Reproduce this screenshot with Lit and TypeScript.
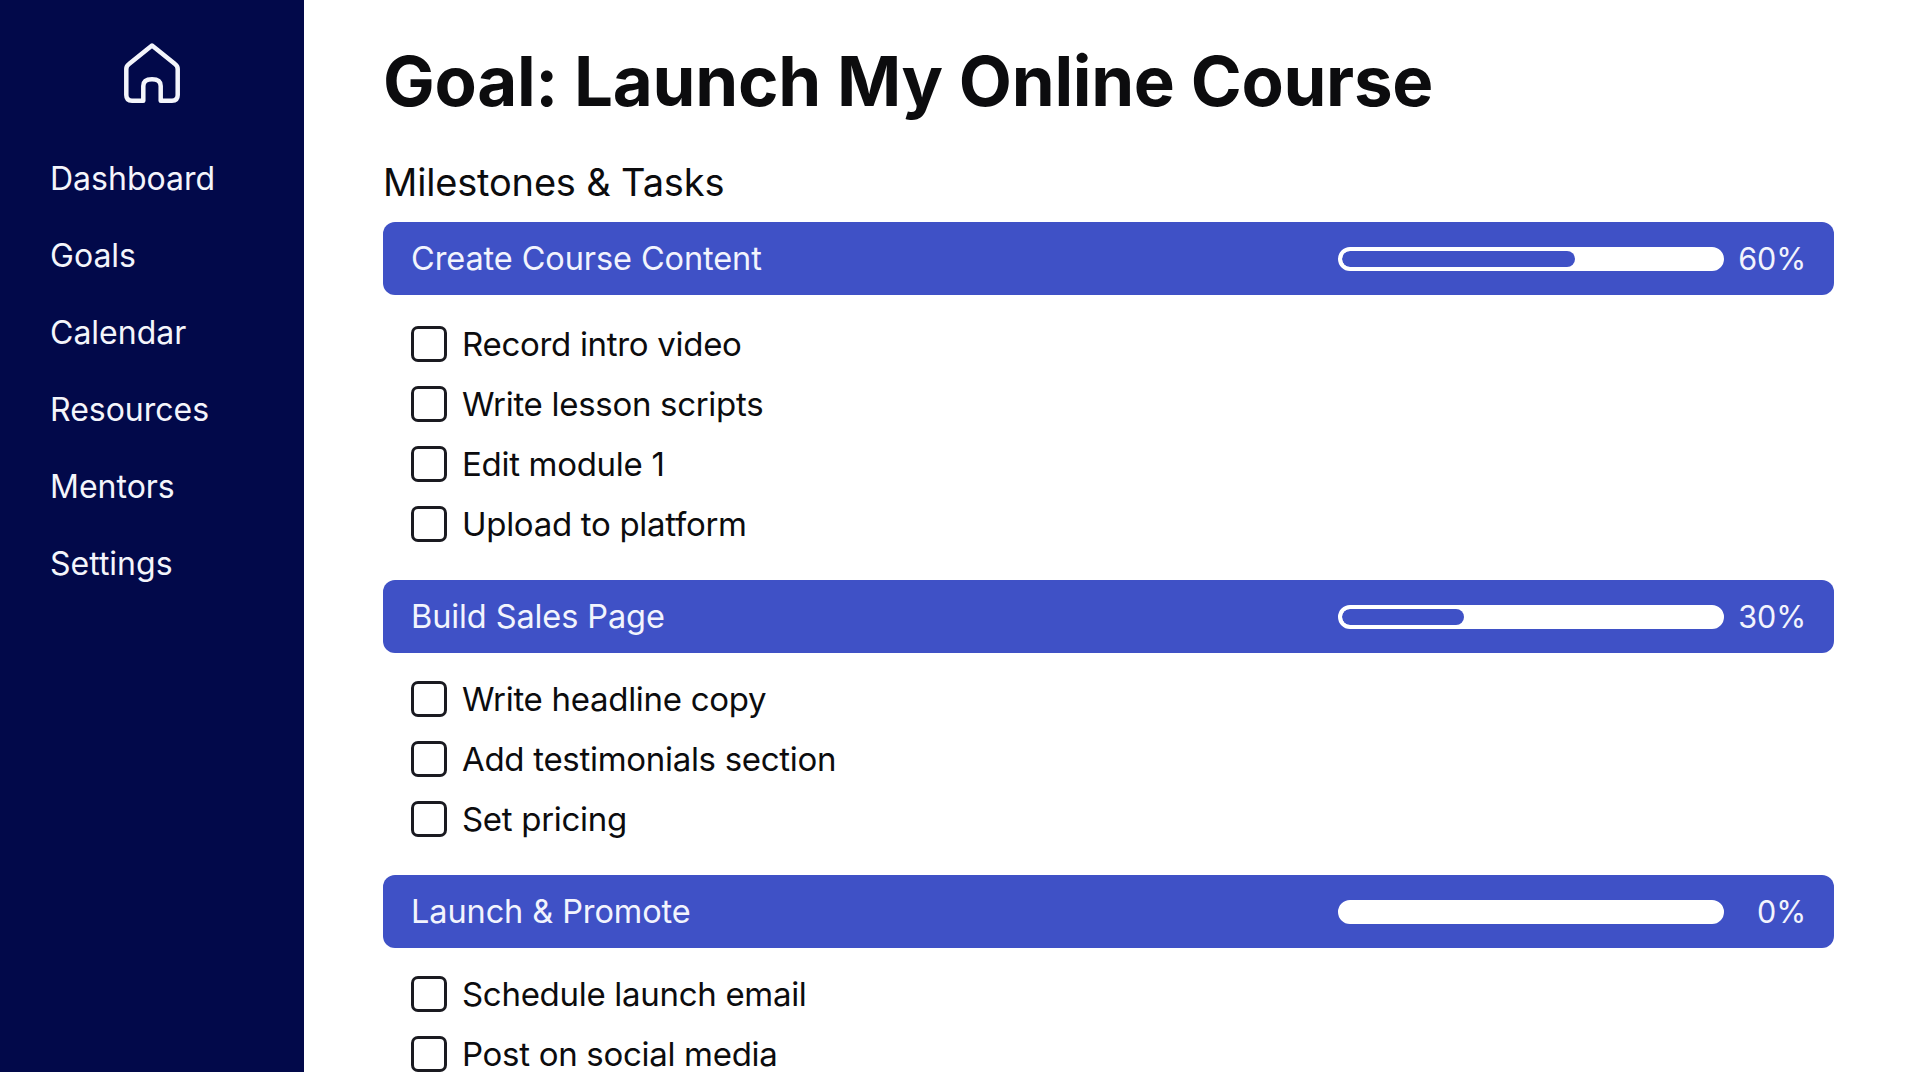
import { LitElement, html, css } from 'lit';
import { customElement } from 'lit/decorators.js';

interface Milestone {
  title: string;
  percent: number;
  tasks: string[];
}

const NAV = ['Dashboard', 'Goals', 'Calendar', 'Resources', 'Mentors', 'Settings'];

const MILESTONES: Milestone[] = [
  {
    title: 'Create Course Content',
    percent: 60,
    tasks: ['Record intro video', 'Write lesson scripts', 'Edit module 1', 'Upload to platform'],
  },
  {
    title: 'Build Sales Page',
    percent: 30,
    tasks: ['Write headline copy', 'Add testimonials section', 'Set pricing'],
  },
  {
    title: 'Launch & Promote',
    percent: 0,
    tasks: ['Schedule launch email', 'Post on social media'],
  },
];

@customElement('app-root')
export class AppRoot extends LitElement {
  static styles = css`
    :host {
      display: flex;
      height: 1072px;
      overflow: hidden;
      background: #fff;
      font-family: Inter, 'Liberation Sans', sans-serif;
      color: #0c0c0e;
    }
    .sidebar {
      flex: 0 0 304px;
      background: #02094a;
      color: #f4f5fb;
      padding: 43px 0 0 50px;
      box-sizing: border-box;
    }
    .logo {
      display: block;
      width: 56px;
      height: 60px;
      margin: 0 0 56px 74px;
    }
    .nav {
      display: flex;
      flex-direction: column;
      gap: 37px;
    }
    .nav div {
      font-size: 32px;
      line-height: 40px;
    }
    .main {
      flex: 1;
      padding: 36px 86px 0 79px;
      min-width: 0;
    }
    h1 {
      margin: 0;
      font-size: 69px;
      line-height: 90px;
      font-weight: 700;
      letter-spacing: -0.3px;
      white-space: nowrap;
    }
    h2 {
      margin: 32px 0 16px;
      font-size: 38px;
      line-height: 48px;
      font-weight: 400;
      letter-spacing: -0.17px;
    }
    .banner {
      display: flex;
      align-items: center;
      height: 73px;
      padding: 0 28px 0 28px;
      background: #3f51c6;
      border-radius: 12px;
      color: #f2f4fd;
      font-size: 32.5px;
      letter-spacing: -0.1px;
    }
    .banner .title {
      flex: 1;
    }
    .track {
      width: 386px;
      height: 24px;
      margin-right: 1px;
      box-sizing: border-box;
      border: 4px solid #fff;
      border-radius: 12px;
      background: #fff;
      overflow: hidden;
    }
    .fill {
      height: 100%;
      background: #3f51c6;
      border-radius: 8px;
    }
    .pct {
      width: 81px;
      text-align: right;
      font-size: 30.5px;
    }
    .tasks {
      display: flex;
      flex-direction: column;
      padding: 16px 0 26px 28px;
    }
    .banner:first-of-type + .tasks {
      padding-top: 19px;
    }
    .task {
      display: flex;
      align-items: center;
      gap: 15px;
      height: 60px;
      font-size: 33px;
      letter-spacing: -0.3px;
    }
    .box {
      flex: none;
      width: 36px;
      height: 36px;
      box-sizing: border-box;
      border: 3px solid #1a1a20;
      border-radius: 7px;
    }
  `;

  render() {
    return html`
      <aside class="sidebar">
        <svg class="logo" viewBox="0 0 56 60" fill="none" stroke="#f4f5fb" stroke-width="4.5" stroke-linejoin="round" stroke-linecap="round">
          <path d="M28 2.5 L51 21 Q53.7 23 53.7 26 V52 Q53.7 57.7 48 57.7 H36.7 V43 Q36.7 36.3 28 36.3 Q19.3 36.3 19.3 43 V57.7 H8 Q2.3 57.7 2.3 52 V26 Q2.3 23 5 21 Z" />
        </svg>
        <nav class="nav">${NAV.map(item => html`<div>${item}</div>`)}</nav>
      </aside>
      <main class="main">
        <h1>Goal: Launch My Online Course</h1>
        <h2>Milestones &amp; Tasks</h2>
        ${MILESTONES.map(m => html`
          <div class="banner">
            <span class="title">${m.title}</span>
            <div class="track">
              ${m.percent > 0 ? html`<div class="fill" style="width:calc(${m.percent * 0.98}% + 11px)"></div>` : ''}
            </div>
            <span class="pct">${m.percent}%</span>
          </div>
          <div class="tasks">
            ${m.tasks.map(t => html`<div class="task"><span class="box"></span>${t}</div>`)}
          </div>
        `)}
      </main>
    `;
  }
}
